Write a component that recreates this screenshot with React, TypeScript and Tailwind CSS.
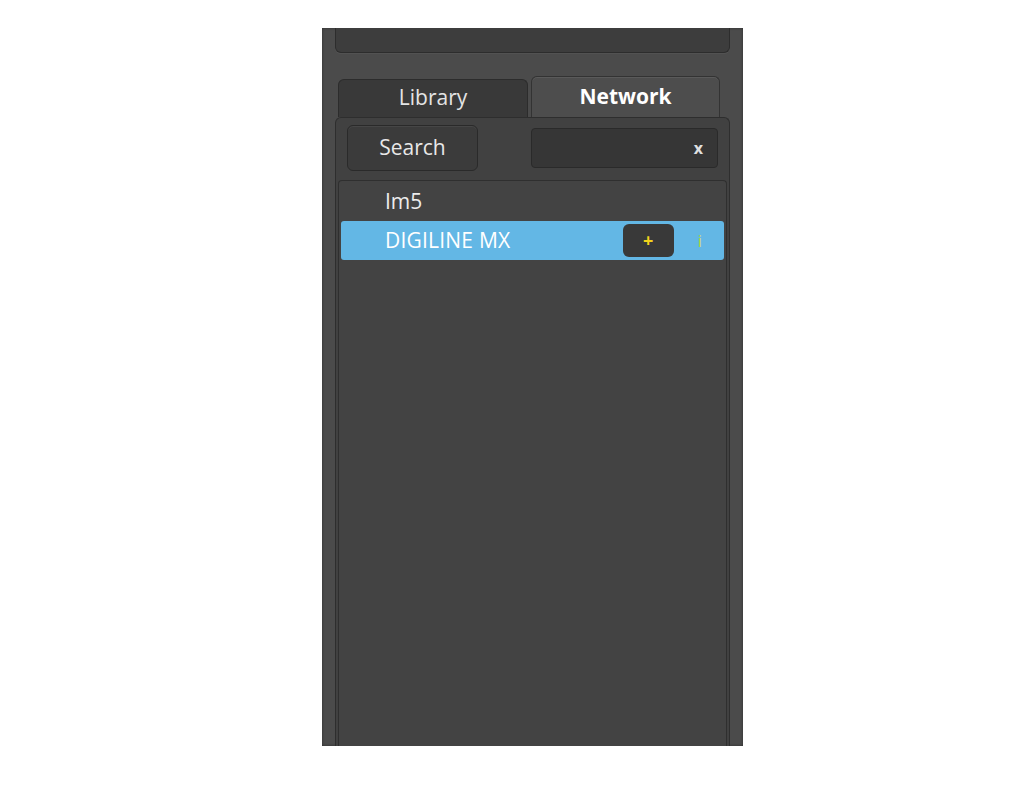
export default function App() {
  return (
    <div className="w-[1024px] h-[802px] bg-white pt-[28px] font-['Open_Sans',sans-serif]">
      <div className="ml-[322px] w-[421px] h-[718px] bg-[#4b4b4b] flex flex-col px-[13px] shadow-[inset_0_0_3px_rgba(0,0,0,0.4)]">
        {/* top box */}
        <div className="h-[25px] bg-[#3d3d3d] border-x border-b border-[#2d2d2d] rounded-b-md shadow-[0_1px_1px_rgba(255,255,255,0.05)]" />

        {/* tabs */}
        <div className="mt-[23px] flex items-end gap-[3px] px-[3px]">
          <div className="w-[190px] h-[38px] bg-[#393939] border border-b-0 border-[#2c2c2c] rounded-t-md flex items-center justify-center text-[21px] text-[#e4e4e4] pb-[2px]">
            Library
          </div>
          <div className="w-[189px] h-[41px] bg-[#4d4d4d] border border-b-0 border-[#333333] rounded-t-md flex items-center justify-center text-[21px] font-bold text-white shadow-[inset_0_1px_0_rgba(255,255,255,0.08)]">
            Network
          </div>
        </div>

        {/* content panel */}
        <div className="flex-1 flex flex-col bg-[#414141] border border-b-0 border-[#2e2e2e] rounded-t-md">
          <div className="h-[62px] flex items-start justify-between pl-[11px] pr-[11px] pt-[7px]">
            <div className="w-[131px] h-[46px] bg-[#3b3b3b] border border-[#2a2a2a] rounded-md flex items-center justify-center text-[21px] text-[#e8e8e8] shadow-[inset_0_1px_0_rgba(255,255,255,0.06)]">
              Search
            </div>
            <div className="mt-[3px] w-[187px] h-[40px] bg-[#363636] border border-[#2a2a2a] rounded-sm flex items-center justify-end pr-[14px] text-[16px] font-bold text-[#e0e0e0]">
              x
            </div>
          </div>

          {/* list */}
          <div className="flex-1 mx-[2px] bg-[#434343] border border-b-0 border-[#2f2f2f] rounded-t-sm pt-[2px] px-[2px]">
            <div className="h-[38px] flex items-center pl-[44px] text-[21px] text-[#ececec]">
              Im5
            </div>
            <div className="h-[39px] bg-[#63b7e5] rounded-[3px] flex items-center pl-[44px] pr-[22px] text-[21px] text-white">
              <span className="flex-1 tracking-[0.01em]">DIGILINE MX</span>
              <div className="w-[51px] h-[33px] bg-[#393939] rounded-md flex items-center justify-center text-[18px] font-bold text-[#f2d31c]">
                +
              </div>
              <span className="ml-[24px] text-[17px] text-[#c4dc3c]">i</span>
            </div>
          </div>
        </div>
      </div>
    </div>
  );
}
